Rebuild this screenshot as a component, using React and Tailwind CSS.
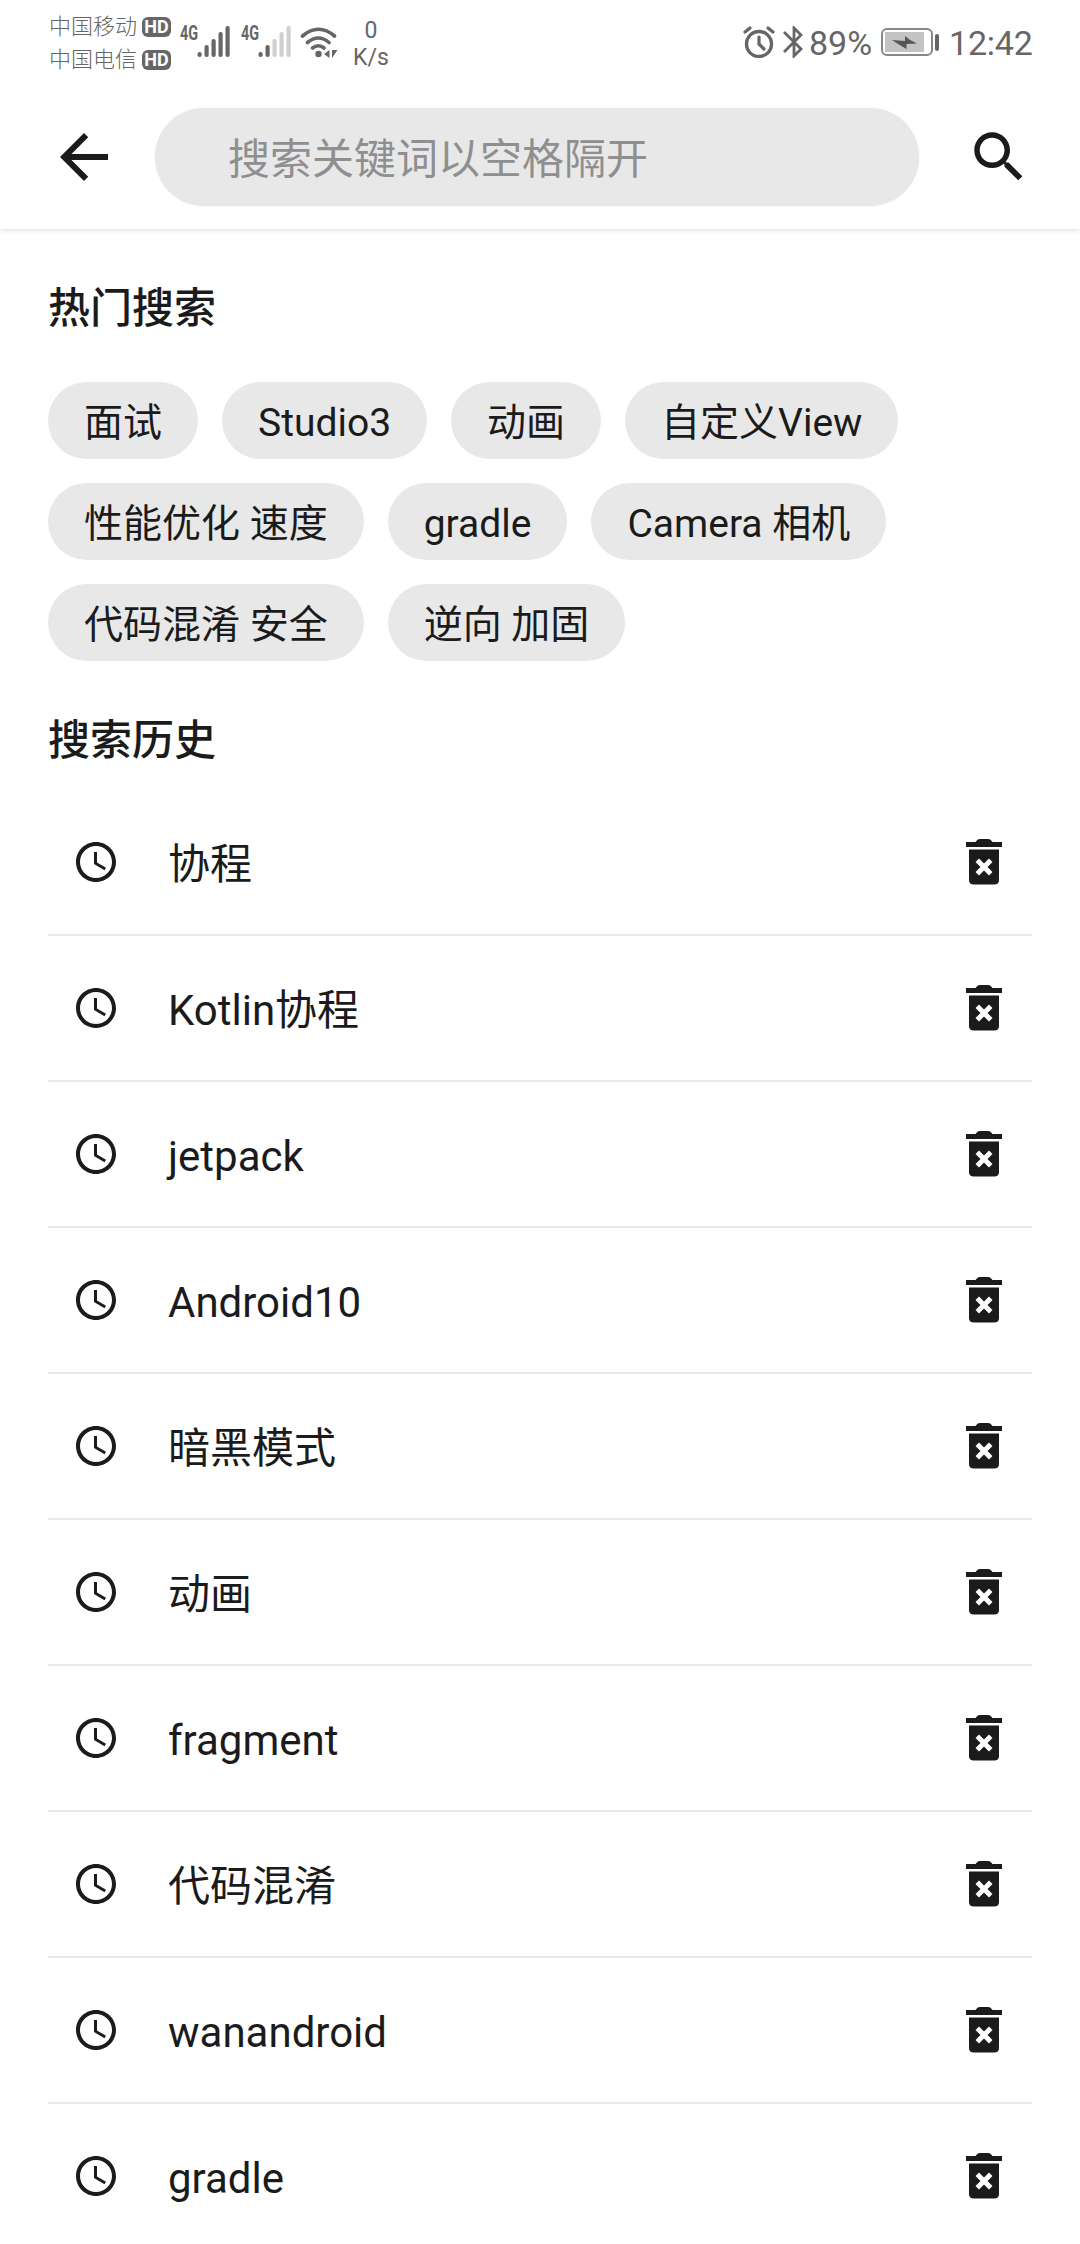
import React from "react";

const HOT = ["面试", "Studio3", "动画", "自定义View", "性能优化 速度", "gradle", "Camera 相机", "代码混淆 安全", "逆向 加固"];
const HISTORY = ["协程", "Kotlin协程", "jetpack", "Android10", "暗黑模式", "动画", "fragment", "代码混淆", "wanandroid", "gradle"];

function Carrier({ name }) {
  return (
    <div className="flex h-[33px] items-center">
      <span className="w-[93px] whitespace-nowrap text-[22px] font-light leading-[33px]">{name}</span>
      <span className="flex h-5 w-[29px] items-center justify-center rounded-md bg-[#666] text-[18px] font-bold leading-none text-white">HD</span>
    </div>
  );
}

function Signal({ active }) {
  const bars = [[2, 26, 5], [9, 19, 12], [16, 13, 18], [23, 6, 25], [30, 0, 31]];
  return (
    <div className="flex w-[50px]">
      <span className="w-[17px] shrink-0 origin-left scale-x-[0.72] text-[20px] font-bold leading-[15px]">4G</span>
      <svg className="h-[31px] w-[33px] shrink-0" viewBox="0 0 33 31">
        {bars.map(([x, y, h], i) => (
          <rect key={x} x={x - 1.5} y={y} width="4.2" height={h} rx="2" fill={i < active ? "#666" : "#d0d0d0"} />
        ))}
      </svg>
    </div>
  );
}

function Wifi() {
  return (
    <svg className="h-[32px] w-[38px]" viewBox="0 0 38 32" fill="none" stroke="#666" strokeWidth="3.6" strokeLinecap="round">
      <path d="M2.500 9Q18.500 -4.500 34.500 9M7.500 15.500Q18.500 6.500 29 15.500M12.500 21Q18.500 16.500 24 21" />
      <circle cx="18.500" cy="27" r="3.2" fill="#666" stroke="none" />
      <path d="M29.500 23v8l-5.500-4zM32 23h5.500l-5.500 8z" fill="#666" stroke="none" />
    </svg>
  );
}

function StatusBar() {
  return (
    <div className="flex h-[84px] items-start pl-[49px] pr-[48px] text-[#666]">
      <div className="w-[122px] pt-[10px]">
        <Carrier name="中国移动" />
        <Carrier name="中国电信" />
      </div>
      <div className="ml-[9px] flex gap-[11px] pt-[26px]">
        <Signal active={5} />
        <Signal active={2} />
      </div>
      <div className="ml-[9px] pt-[27px]"><Wifi /></div>
      <div className="ml-[15px] w-[36px] pt-[17px] text-center text-[23px] leading-[27px]">
        <div>0</div>
        <div className="whitespace-nowrap">K/s</div>
      </div>
      <div className="ml-auto flex h-[84px] items-center">
        <svg className="h-[32px] w-[32px]" viewBox="0 0 32 32" fill="none" stroke="#666">
          <circle cx="16" cy="18" r="12.500" strokeWidth="3.400" />
          <path d="M16 11v7l5 5" strokeWidth="3.200" strokeLinecap="round" />
          <path d="M2 6l5-4M30 6l-5-4" strokeWidth="3.200" strokeLinecap="round" />
        </svg>
        <svg className="ml-[8px] h-[32px] w-[20px]" viewBox="0 0 20 32" fill="none" stroke="#666" strokeWidth="2.800">
          <path d="M1 6l17 17-7 7V2l7 7L1 26" />
        </svg>
        <span className="ml-[6px] mt-px w-[63px] whitespace-nowrap text-[34px] leading-none">89%</span>
        <div className="ml-[9px] flex h-[28px] w-[52px] rounded-md border-2 border-[#888] p-[2px]">
          <div className="flex h-[20px] w-[39px] items-center justify-center bg-[#c3c3c3]">
            <svg className="h-[13px] w-[25px]" viewBox="0 0 25 13" fill="#555"><path d="M0 4L13 5V0L18 4L25 7.500L14.500 8V13L6 8Z" /></svg>
          </div>
        </div>
        <div className="ml-[2px] h-[17px] w-[4px] rounded-sm bg-[#666]" />
        <span className="ml-[10px] mt-px w-[83px] whitespace-nowrap text-[34px] leading-none tracking-[-0.2px]">12:42</span>
      </div>
    </div>
  );
}

function Trash() {
  return (
    <svg className="h-[46px] w-[36px]" viewBox="0 0 36 46" fill="#1b1b1c">
      <path d="M0 3h9.500q2-3 4-3h9q2 0 4 3H36v5H0z" />
      <path fillRule="evenodd" d="M3 10.500h30v30.500q0 4.500-5 4.500H8q-5 0-5-4.500zM18 24.500l-5-5-3.500 3.500 5 5-5 5 3.500 3.500 5-5 5 5 3.500-3.500-5-5 5-5-3.500-3.500z" />
    </svg>
  );
}

export default function App() {
  return (
    <div className="h-[2244px] w-[1080px] overflow-hidden bg-white font-['Roboto','Noto_Sans_CJK_SC',sans-serif] text-[#1b1b1c]">
      <header className="h-[229px] shadow-[0_1px_5px_rgba(0,0,0,0.15)]">
        <StatusBar />
        <div className="flex h-[145px] items-center pl-12 pr-[48px]">
          <svg className="size-[72px]" viewBox="0 0 24 24" fill="#1b1b1c"><path d="M20 11H7.830l5.590-5.590L12 4l-8 8 8 8 1.410-1.410L7.830 13H20v-2z" /></svg>
          <div className="ml-[35px] flex h-[98px] w-[764px] items-center rounded-full bg-[#e8e8e8] pl-[73px] pt-[5px] text-[42px] text-[#8f8f8f] shadow-[0_0_2px_rgba(0,0,0,0.08)]">搜索关键词以空格隔开</div>
          <svg className="ml-auto size-[66px]" viewBox="0 0 24 24" fill="#1b1b1c"><path d="M15.500 14h-.790l-.280-.270C15.410 12.590 16 11.110 16 9.500 16 5.910 13.090 3 9.500 3S3 5.910 3 9.500 5.910 16 9.500 16c1.610 0 3.090-.590 4.230-1.570l.270.280v.790l5 4.990L20.490 19l-4.990-5zm-6 0C7.010 14 5 11.990 5 9.500S7.010 5 9.500 5 14 7.010 14 9.500 11.990 14 9.500 14z" /></svg>
        </div>
      </header>
      <main className="px-12">
        <h2 className="mt-[50px] text-[42px] font-medium leading-[60px]">热门搜索</h2>
        <div className="mt-[43px] flex w-[900px] flex-wrap gap-6">
          {HOT.map((t) => (
            <span key={t} className="flex h-[77px] items-center whitespace-nowrap rounded-full bg-[#e8e8e8] px-9 pt-[5px] text-[39px]">{t}</span>
          ))}
        </div>
        <h2 className="mt-[50px] text-[42px] font-medium leading-[60px]">搜索历史</h2>
        <ul className="mt-[19px]">
          {HISTORY.map((t) => (
            <li key={t} className="flex h-[146px] items-center border-b-2 border-[#e8e8e8] pl-6 pr-[30px]">
              <svg className="size-12" viewBox="0 0 24 24" fill="#1b1b1c"><path d="M11.990 2C6.470 2 2 6.480 2 12s4.470 10 9.990 10C17.520 22 22 17.520 22 12S17.520 2 11.990 2zM12 20c-4.420 0-8-3.580-8-8s3.580-8 8-8 8 3.580 8 8-3.580 8-8 8zm.500-13H11v6l5.250 3.150.750-1.230-4.500-2.670z" /></svg>
              <span className="ml-12 flex-1 pt-[6px] text-[42px] leading-[60px]">{t}</span>
              <Trash />
            </li>
          ))}
        </ul>
      </main>
    </div>
  );
}
